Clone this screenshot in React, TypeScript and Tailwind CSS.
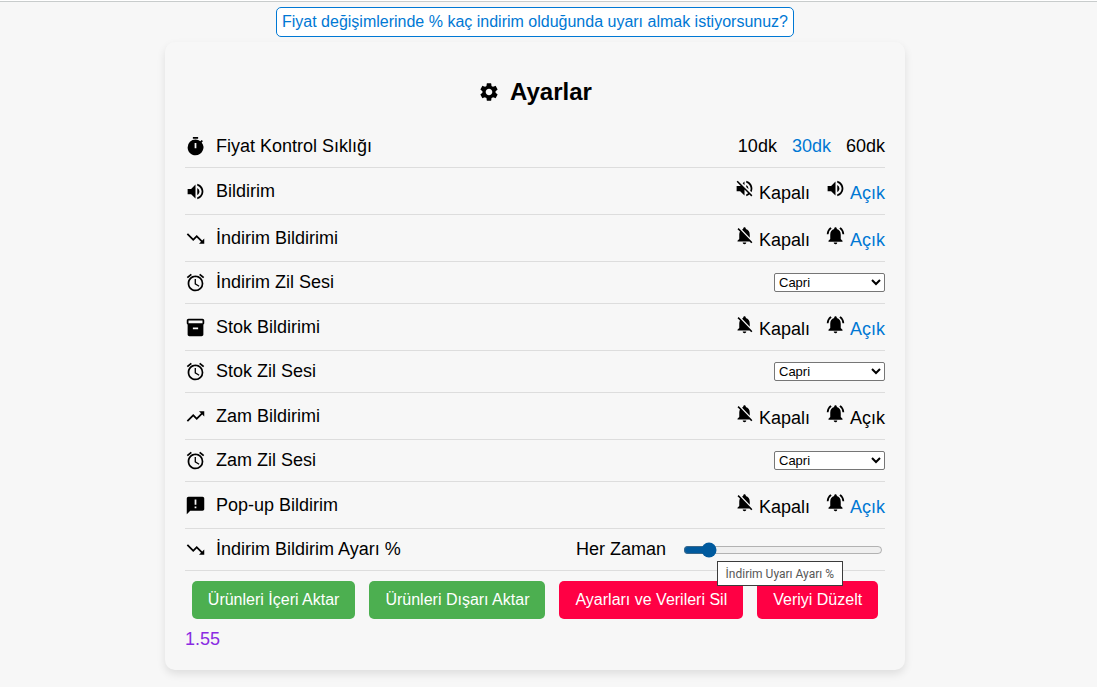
import React, { useState } from 'react';
import type { IconType } from 'react-icons';
import {
  MdAlarm,
  MdAnnouncement,
  MdInventory2,
  MdNotificationsActive,
  MdNotificationsOff,
  MdSettings,
  MdTimer,
  MdTrendingDown,
  MdTrendingUp,
  MdVolumeOff,
  MdVolumeUp,
} from 'react-icons/md';

const SOUNDS = ['Capri', 'Bell', 'Chime'];
const INTERVALS = ['10dk', '30dk', '60dk'];

interface RowProps {
  icon: IconType;
  label: string;
  htmlFor?: string;
  children: React.ReactNode;
}

const Row: React.FC<RowProps> = ({ icon: Icon, label, htmlFor, children }) => (
  <div className="flex items-center justify-between border-b border-[#dddddd] py-[10px]">
    <div className="flex items-center gap-[10px]">
      <Icon size={21} aria-hidden="true" />
      {htmlFor ? <label htmlFor={htmlFor}>{label}</label> : <span>{label}</span>}
    </div>
    {children}
  </div>
);

interface ToggleRowProps {
  icon: IconType;
  label: string;
  initial?: boolean;
  offIcon?: IconType;
  onIcon?: IconType;
}

const ToggleRow: React.FC<ToggleRowProps> = ({
  icon,
  label,
  initial = true,
  offIcon: OffIcon = MdNotificationsOff,
  onIcon: OnIcon = MdNotificationsActive,
}) => {
  const [on, setOn] = useState(initial);

  return (
    <Row icon={icon} label={label}>
      <div className="flex gap-[15px]">
        <button type="button" onClick={() => setOn(false)} className="flex items-end gap-1">
          <OffIcon size={21} className="mb-[5px]" aria-hidden="true" />
          <span>Kapalı</span>
        </button>
        <button type="button" onClick={() => setOn(true)} className="flex items-end gap-1">
          <OnIcon size={21} className="mb-[5px]" aria-hidden="true" />
          <span className={on ? 'text-[#0078d4]' : ''}>Açık</span>
        </button>
      </div>
    </Row>
  );
};

const SoundRow: React.FC<{ id: string; label: string }> = ({ id, label }) => (
  <Row icon={MdAlarm} label={label} htmlFor={id}>
    <select
      id={id}
      className="h-[19px] w-[111px] rounded-xs border border-[#767676] bg-white text-[13px] leading-4"
    >
      {SOUNDS.map((s) => (
        <option key={s}>{s}</option>
      ))}
    </select>
  </Row>
);

const ActionButton: React.FC<{ danger?: boolean; children: React.ReactNode }> = ({ danger, children }) => (
  <button
    type="button"
    className={`rounded-[5px] px-4 py-[10px] text-base leading-[18px] text-white ${
      danger ? 'bg-[#ff0044]' : 'bg-[#4caf50]'
    }`}
  >
    {children}
  </button>
);

export default function App() {
  const [interval, setIntervalValue] = useState('30dk');
  const [threshold, setThreshold] = useState(10);

  return (
    <div className="min-h-screen bg-white pt-px font-['Liberation_Sans',Arial,sans-serif] text-lg leading-[21px] text-black">
      <div className="flex min-h-screen flex-col items-center border-t border-[#c8cccc] bg-[#f7f7f7] pr-[27px] pt-[5px]">
        <p className="rounded-[5px] border border-[#0078d4] bg-white p-[5px] text-base leading-[18px] text-[#0078d4]">
          Fiyat değişimlerinde % kaç indirim olduğunda uyarı almak istiyorsunuz?
        </p>

        <main className="mt-[5px] w-full max-w-[740px] rounded-[10px] bg-[#f7f7f7] p-5 shadow-[0_4px_8px_rgba(0,0,0,0.1)]">
          <h1 className="flex items-center justify-center gap-[10px] pt-4 pb-5 text-2xl leading-7 font-bold">
            <MdSettings size={22} aria-hidden="true" /> Ayarlar
          </h1>

          <Row icon={MdTimer} label="Fiyat Kontrol Sıklığı">
            <div className="flex gap-[15px]">
              {INTERVALS.map((v) => (
                <button
                  key={v}
                  type="button"
                  onClick={() => setIntervalValue(v)}
                  className={interval === v ? 'text-[#0078d4]' : ''}
                >
                  {v}
                </button>
              ))}
            </div>
          </Row>
          <ToggleRow icon={MdVolumeUp} label="Bildirim" offIcon={MdVolumeOff} onIcon={MdVolumeUp} />
          <ToggleRow icon={MdTrendingDown} label="İndirim Bildirimi" />
          <SoundRow id="discount-sound" label="İndirim Zil Sesi" />
          <ToggleRow icon={MdInventory2} label="Stok Bildirimi" />
          <SoundRow id="stock-sound" label="Stok Zil Sesi" />
          <ToggleRow icon={MdTrendingUp} label="Zam Bildirimi" initial={false} />
          <SoundRow id="raise-sound" label="Zam Zil Sesi" />
          <ToggleRow icon={MdAnnouncement} label="Pop-up Bildirim" />
          <Row icon={MdTrendingDown} label="İndirim Bildirim Ayarı %" htmlFor="threshold">
            <div className="relative flex items-center gap-[17px]">
              <span>Her Zaman</span>
              <input
                id="threshold"
                type="range"
                min={0}
                max={100}
                value={threshold}
                onChange={(e) => setThreshold(Number(e.target.value))}
                className="mr-[2px] h-4 w-[200px] accent-[#005a9e]"
              />
              <div
                role="tooltip"
                className="absolute top-[22px] right-[42px] border border-[#3c3c3c] bg-white px-2 pt-1 pb-[3px] font-[Roboto,sans-serif] text-xs leading-4 whitespace-nowrap text-[#575757]"
              >
                İndirim Uyarı Ayarı %
              </div>
            </div>
          </Row>

          <div className="flex flex-wrap justify-center gap-[14px] py-[10px]">
            <ActionButton>Ürünleri İçeri Aktar</ActionButton>
            <ActionButton>Ürünleri Dışarı Aktar</ActionButton>
            <ActionButton danger>Ayarları ve Verileri Sil</ActionButton>
            <ActionButton danger>Veriyi Düzelt</ActionButton>
          </div>

          <a href="#surum" className="block w-fit text-[#8a2be2]">
            1.55
          </a>
        </main>
      </div>
    </div>
  );
}
